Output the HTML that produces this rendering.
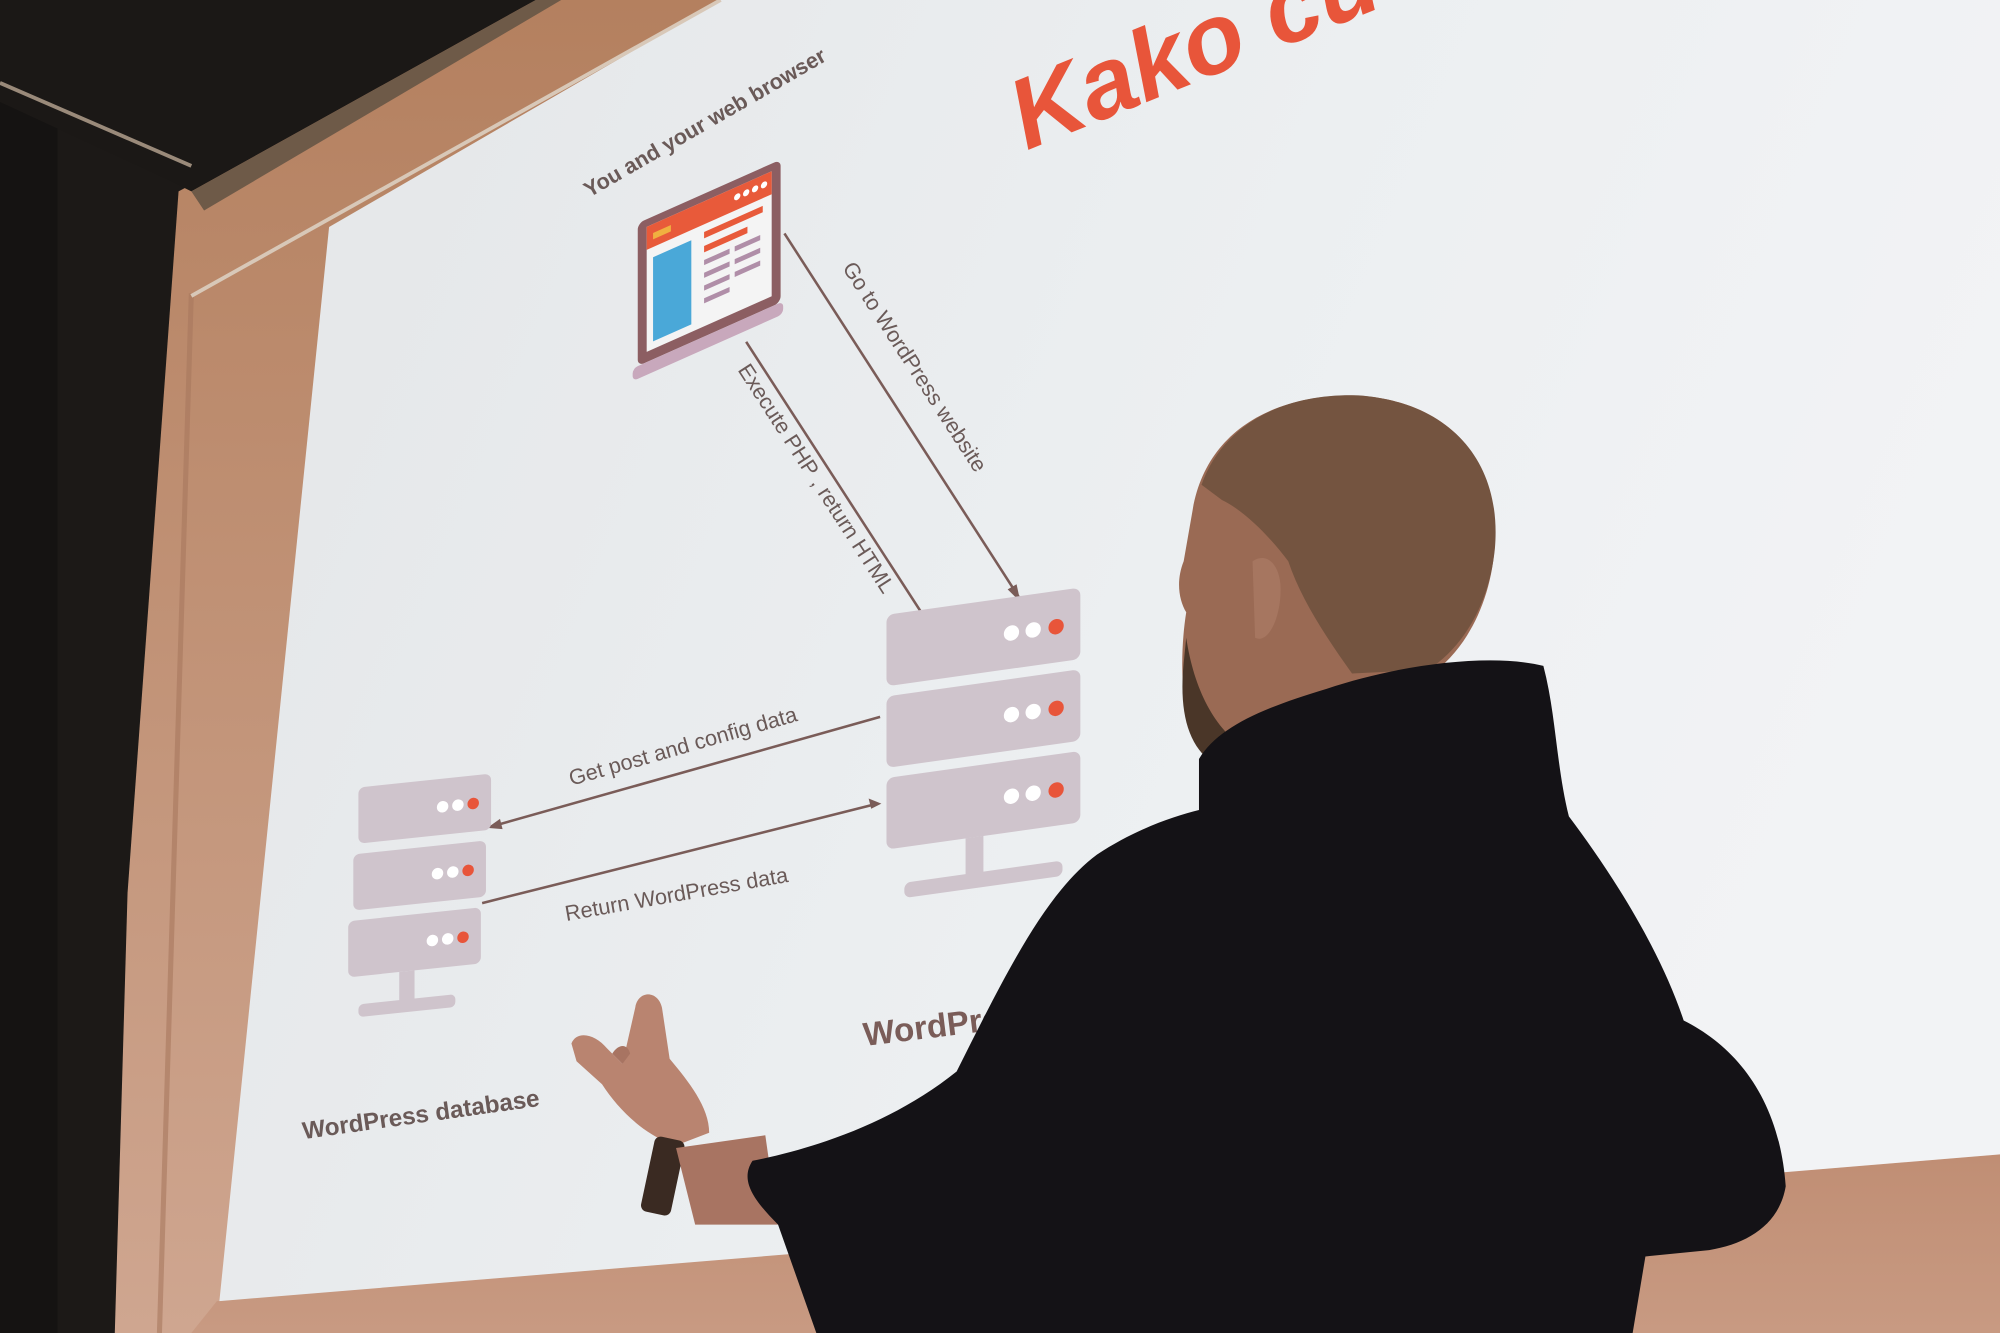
<!DOCTYPE html>
<html><head><meta charset="utf-8"><style>
html,body{margin:0;padding:0;width:2000px;height:1333px;overflow:hidden;background:#1a1614}
svg{display:block}
text{font-family:"Liberation Sans",Arial,sans-serif}
</style></head><body>
<svg width="2000" height="1333" viewBox="0 0 1568 1045" preserveAspectRatio="none" xmlns="http://www.w3.org/2000/svg">
<defs>
<linearGradient id="scr" x1="0" y1="0" x2="1" y2="0.3">
<stop offset="0" stop-color="#e4e6e8"/><stop offset="0.6" stop-color="#eceff1"/><stop offset="1" stop-color="#f2f3f5"/>
</linearGradient>
<linearGradient id="wall" x1="0" y1="0" x2="0" y2="1">
<stop offset="0" stop-color="#c08e74"/><stop offset="1" stop-color="#c89a82"/>
</linearGradient>
<linearGradient id="pil" x1="0" y1="0" x2="0" y2="1">
<stop offset="0" stop-color="#b4805f"/><stop offset="1" stop-color="#cfa690"/>
</linearGradient>
</defs>
<rect width="1568" height="1045" fill="#1c1917"/>
<rect x="0" y="0" width="45" height="1045" fill="#151312"/>
<!-- pillar -->
<polygon points="140,150 420,0 1568,0 1568,1045 90,1045 100,700" fill="url(#pil)"/>
<line x1="150" y1="230" x2="125" y2="1045" stroke="#a8785e" stroke-width="4" opacity="0.6"/>
<!-- beam -->
<polygon points="0,0 420,0 150,150 130,140 0,80" fill="#1b1816"/>
<polygon points="150,150 420,0 440,0 160,165" fill="#6e5a48"/>
<line x1="0" y1="65" x2="150" y2="130" stroke="#9a8a7a" stroke-width="3"/>
<!-- wall bottom -->
<polygon points="170,1020 1568,905 1568,1045 150,1045" fill="url(#wall)"/>
<!-- screen -->
<polygon points="258,178 565,0 1568,0 1568,905 172,1020" fill="url(#scr)"/>
<line x1="150" y1="232" x2="565" y2="0" stroke="#d8c8b8" stroke-width="3"/>
<text x="0" y="0" font-size="78" font-weight="bold" font-style="italic" fill="#e8553a" transform="translate(805,118) rotate(-22)">Kako ču</text>
<!-- laptop -->
<g transform="translate(500,175) skewY(-24)">
<rect x="0" y="0" width="112" height="112" rx="5" fill="#8c5e62"/>
<rect x="7" y="6" width="98" height="98" fill="#f4f4f4"/>
<rect x="7" y="6" width="98" height="18" fill="#e85a3a"/>
<rect x="12" y="13" width="14" height="5" fill="#f0b040"/>
<circle cx="78" cy="14" r="2.5" fill="#fff"/><circle cx="85" cy="14" r="2.5" fill="#fff"/><circle cx="92" cy="14" r="2.5" fill="#fff"/><circle cx="99" cy="14" r="2.5" fill="#fff"/>
<rect x="12" y="32" width="30" height="66" fill="#4aa8d8"/>
<rect x="52" y="30" width="46" height="5" fill="#e85a3a"/>
<rect x="52" y="41" width="34" height="5" fill="#e85a3a"/>
<rect x="52" y="52" width="20" height="4" fill="#b08ea8"/><rect x="76" y="52" width="20" height="4" fill="#b08ea8"/>
<rect x="52" y="62" width="20" height="4" fill="#b08ea8"/><rect x="76" y="62" width="20" height="4" fill="#b08ea8"/>
<rect x="52" y="72" width="20" height="4" fill="#b08ea8"/><rect x="76" y="72" width="20" height="4" fill="#b08ea8"/>
<rect x="52" y="82" width="20" height="4" fill="#b08ea8"/>
<rect x="-4" y="112" width="118" height="10" rx="4" fill="#c8a8bc"/>
</g>
<text font-size="17" font-weight="bold" fill="#6a5a58" transform="translate(462,155) rotate(-30)">You and your web browser</text>
<!-- arrows -->
<g stroke="#7a5c58" stroke-width="2">
<line x1="615" y1="183" x2="800" y2="470"/>
<line x1="585" y1="268" x2="730" y2="492"/>
<line x1="690" y1="562" x2="385" y2="648"/>
<line x1="378" y1="708" x2="688" y2="630"/>
</g>
<g fill="#7a5c58">
<polygon points="800,472 790,462 797,458"/>
<polygon points="732,495 722,485 729,481"/>
<polygon points="382,649 392,642 394,650"/>
<polygon points="691,630 681,626 683,634"/>
</g>
<text font-size="17" fill="#6a5a58" transform="translate(660,210) rotate(57)">Go to WordPress website</text>
<text font-size="17" fill="#6a5a58" transform="translate(578,290) rotate(57)">Execute PHP , return HTML</text>
<text font-size="17" fill="#6a5a58" transform="translate(448,616) rotate(-16)">Get post and config data</text>
<text font-size="17" fill="#6a5a58" transform="translate(444,722) rotate(-10)">Return WordPress data</text>
<!-- big server -->
<g transform="translate(695,462) skewY(-8)">
<rect x="0" y="20" width="152" height="56" rx="6" fill="#cfc4cc"/>
<rect x="0" y="84" width="152" height="56" rx="6" fill="#cfc4cc"/>
<rect x="0" y="148" width="152" height="56" rx="6" fill="#cfc4cc"/>
<g fill="#fff"><circle cx="98" cy="48" r="6"/><circle cx="115" cy="48" r="6"/><circle cx="98" cy="112" r="6"/><circle cx="115" cy="112" r="6"/><circle cx="98" cy="176" r="6"/><circle cx="115" cy="176" r="6"/></g>
<g fill="#e8553a"><circle cx="133" cy="48" r="6"/><circle cx="133" cy="112" r="6"/><circle cx="133" cy="176" r="6"/></g>
<rect x="62" y="204" width="14" height="30" fill="#cfc4cc"/>
<rect x="14" y="232" width="124" height="12" rx="5" fill="#cfc4cc"/>
</g>
<text font-size="26" font-weight="bold" fill="#7a5c58" transform="translate(678,820) rotate(-7)">WordPress</text>
<!-- db server -->
<g transform="translate(275,612) skewY(-6)">
<rect x="6" y="6" width="104" height="44" rx="5" fill="#cfc4cc"/>
<rect x="2" y="58" width="104" height="44" rx="5" fill="#cfc4cc"/>
<rect x="-2" y="110" width="104" height="44" rx="5" fill="#cfc4cc"/>
<g fill="#fff"><circle cx="72" cy="28" r="4.5"/><circle cx="84" cy="28" r="4.5"/><circle cx="68" cy="80" r="4.5"/><circle cx="80" cy="80" r="4.5"/><circle cx="64" cy="132" r="4.5"/><circle cx="76" cy="132" r="4.5"/></g>
<g fill="#e8553a"><circle cx="96" cy="28" r="4.5"/><circle cx="92" cy="80" r="4.5"/><circle cx="88" cy="132" r="4.5"/></g>
<rect x="38" y="154" width="12" height="24" fill="#cfc4cc"/>
<rect x="6" y="176" width="76" height="10" rx="4" fill="#cfc4cc"/>
</g>
<text font-size="19" font-weight="bold" fill="#6a5a58" transform="translate(238,893) rotate(-8)">WordPress database</text>
<!-- hand -->
<path d="M448,818 C452,808 466,810 476,822 L488,834 L498,790 C500,776 516,776 519,790 L525,830 C540,848 556,868 556,888 L530,898 C505,890 485,870 472,850 L452,832 Z" fill="#b98470"/>
<path d="M488,834 L480,826 C485,818 492,818 494,826 Z" fill="#a87462"/>
<rect x="508" y="892" width="24" height="60" rx="5" fill="#3a2a22" transform="rotate(12 520 920)"/>
<path d="M530,900 L600,890 L610,960 L545,960 Z" fill="#a87462"/>
<!-- head -->
<path d="M935,400 C945,340 995,310 1060,310 C1130,312 1175,355 1172,425 C1170,470 1150,510 1120,530 L1000,560 C965,585 940,595 932,565 C925,540 926,505 930,480 C924,470 922,455 928,440 Z" fill="#9a6a54"/>
<path d="M942,380 C960,330 1010,308 1065,310 C1135,315 1178,360 1172,430 C1168,470 1150,505 1120,525 L1060,528 C1040,500 1020,470 1010,440 C995,420 975,400 958,392 Z" fill="#745440"/>
<path d="M982,440 C994,432 1004,444 1004,462 C1004,485 994,505 984,500 Z" fill="#a67660"/>
<path d="M930,500 C936,540 952,572 978,588 L958,602 C932,590 924,560 928,520 Z" fill="#4a3628"/>
<!-- hoodie -->
<path d="M940,595 C955,570 990,555 1040,540 C1100,520 1170,512 1210,522 C1220,560 1220,600 1230,640 C1260,680 1300,740 1320,800 C1360,820 1395,860 1400,930 C1395,960 1370,975 1340,980 L1290,985 L1280,1045 L640,1045 L610,960 C590,940 580,925 590,910 C640,900 700,880 750,840 C790,760 820,700 860,670 C890,650 920,640 940,635 Z" fill="#141216"/>
</svg>
</body></html>
